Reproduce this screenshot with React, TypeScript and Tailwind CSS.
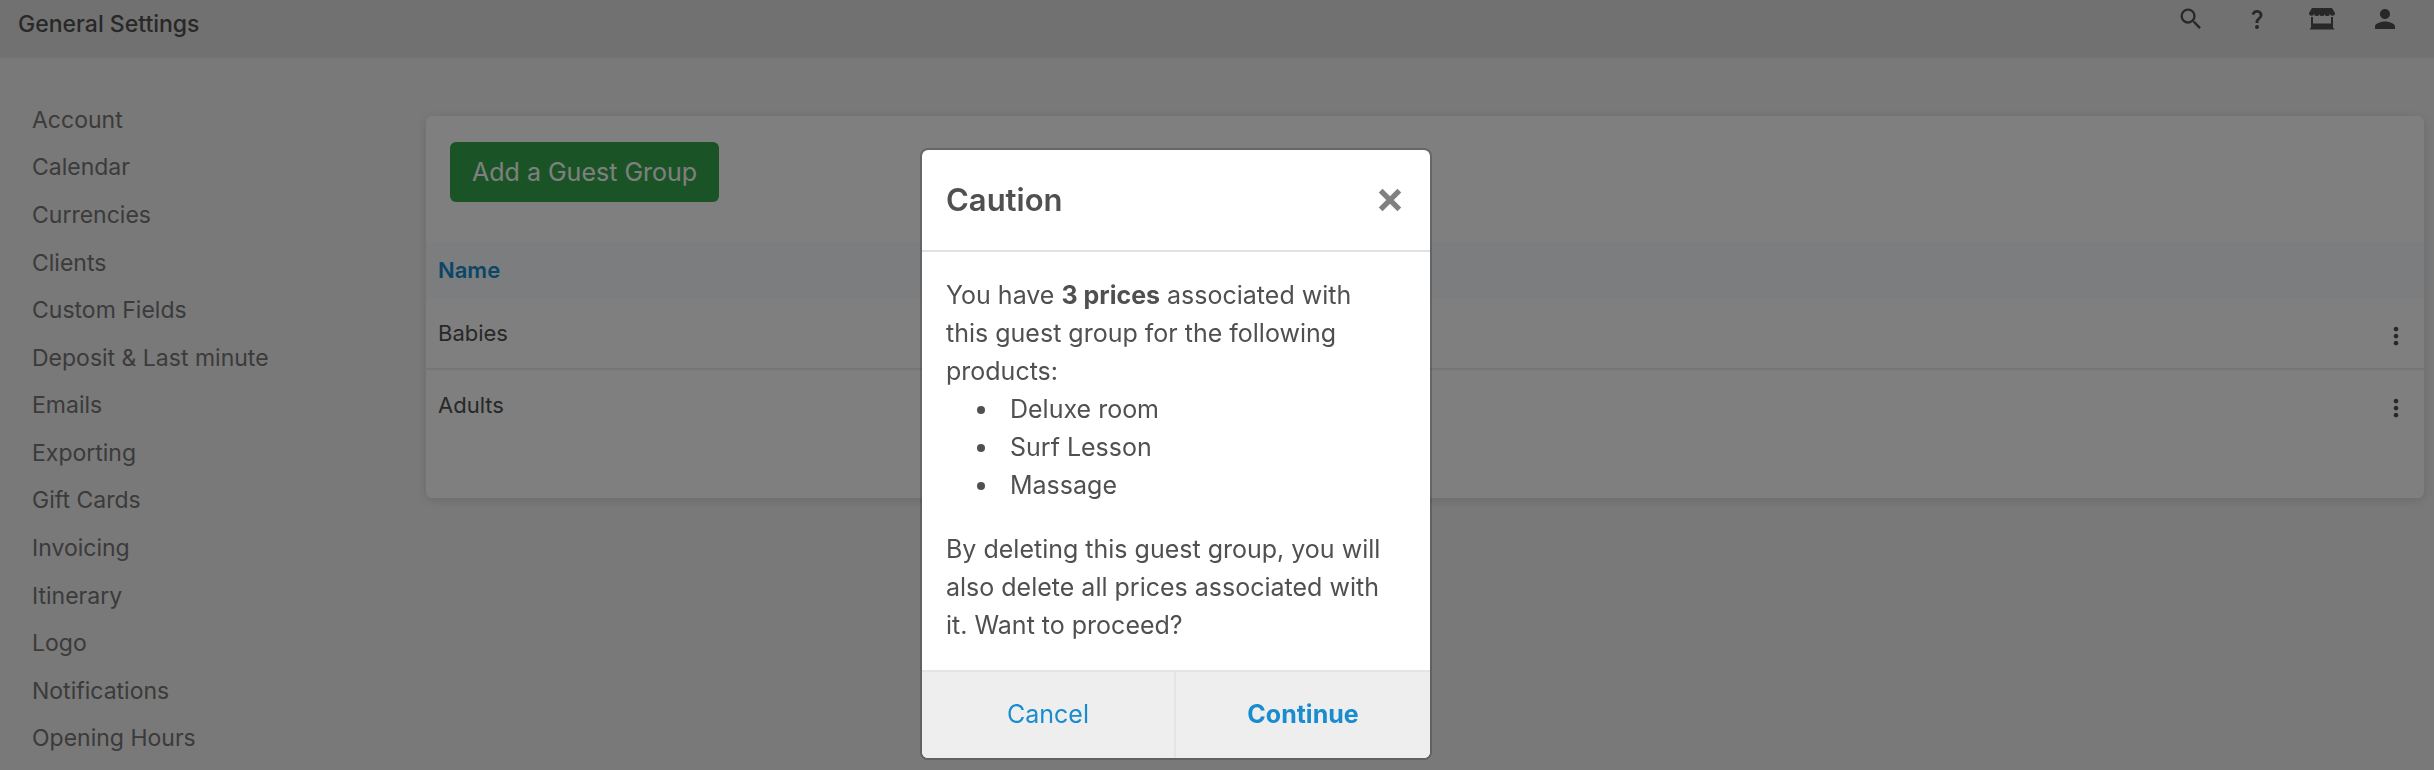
import React from "react";
import { MdSearch, MdQuestionMark, MdPerson, MdMoreVert } from "react-icons/md";

const sections = [
  "Account",
  "Calendar",
  "Currencies",
  "Clients",
  "Custom Fields",
  "Deposit & Last minute",
  "Emails",
  "Exporting",
  "Gift Cards",
  "Invoicing",
  "Itinerary",
  "Logo",
  "Notifications",
  "Opening Hours",
];

const groups = ["Babies", "Adults"];
const products = ["Deluxe room", "Surf Lesson", "Massage"];

function StoreIcon() {
  return (
    <svg viewBox="0 0 26 22" className="h-[22px] w-[26px]" fill="currentColor" aria-hidden="true">
      <path d="M3 0h20l3 5a2.600 2.600 0 0 1-5.200 0.500a2.600 2.600 0 0 1-5.200 0a2.600 2.600 0 0 1-5.200 0a2.600 2.600 0 0 1-5.200 0a2.600 2.600 0 0 1-5.200-.5z" />
      <path d="M2 9h2v6.500h18V9h2v10.500l1.500 2h-25l1.500-2z" />
    </svg>
  );
}

function Header() {
  return (
    <header className="flex h-[58px] items-start justify-between bg-[#e2e2e2] pl-[18px] pr-[34px] text-[#505050]">
      <h1 className="mt-1 text-[23px] font-medium leading-10">General Settings</h1>
      <div className="mt-1 flex items-center text-[#505050]">
        <button aria-label="Search" className="flex h-[30px] w-[66px] items-center justify-center">
          <MdSearch size={28} />
        </button>
        <button aria-label="Help" className="flex h-[30px] w-[66px] items-center justify-center">
          <MdQuestionMark size={24} />
        </button>
        <button aria-label="Store" className="flex h-[30px] w-16 items-center justify-center">
          <StoreIcon />
        </button>
        <button aria-label="Profile" className="flex h-[30px] w-[46px] items-center justify-end">
          <MdPerson size={30} />
        </button>
      </div>
    </header>
  );
}

function Sidebar() {
  return (
    <nav aria-label="Settings" className="w-[426px] shrink-0 pt-[38px]">
      <ul className="flex h-[666px] flex-col pl-8">
        {sections.map((s) => (
          <li key={s} className="flex flex-1 items-center">
            <a href="#" className="text-[23px] leading-8 text-[#767676]">
              {s}
            </a>
          </li>
        ))}
      </ul>
    </nav>
  );
}

function GuestGroups() {
  return (
    <main className="mr-[10px] mt-[58px] min-w-0 grow self-start rounded-md bg-white pb-14 shadow-[0_2px_10px_rgba(0,0,0,0.12)]">
      <div className="px-6 pb-10 pt-[26px]">
        <button className="h-[60px] rounded-md bg-[#34a84c] px-[22px] pt-[2px] text-[25px] text-white">
          Add a Guest Group
        </button>
      </div>
      <table className="w-full border-separate border-spacing-0 text-left text-[22px] text-[#505050]">
        <thead>
          <tr className="h-14 bg-[#f6fafe]">
            <th scope="col" className="px-3 font-semibold text-[#188ccf]">Name</th>
            <td />
          </tr>
        </thead>
        <tbody>
          {groups.map((g) => (
            <tr key={g} className="group h-[72px]">
              <td className="border-b-2 border-[#ececec] px-3 group-last:border-white">{g}</td>
              <td className="border-b-2 border-[#ececec] pr-[14px] text-right group-last:border-white">
                <button aria-label={`Actions for ${g}`} className="pt-1 align-middle">
                  <MdMoreVert size={28} />
                </button>
              </td>
            </tr>
          ))}
        </tbody>
      </table>
    </main>
  );
}

function CautionDialog() {
  return (
    <div className="fixed inset-0 flex items-start justify-center bg-black/50 pr-[82px] pt-[148px]">
      <div
        role="dialog"
        aria-modal="true"
        aria-labelledby="caution-title"
        className="w-[512px] rounded-lg border-2 border-black/20 bg-white bg-clip-padding text-[#505050]"
      >
        <div className="flex h-[102px] items-center justify-between border-b-2 border-[#dee2e6] px-6">
          <h2 id="caution-title" className="text-[31px] font-semibold">Caution</h2>
          <button aria-label="Close" className="text-[#808080]">
            <svg viewBox="0 0 24 24" className="size-8" stroke="currentColor" strokeWidth="4" aria-hidden="true">
              <path d="M5 5 19 19M19 5 5 19" />
            </svg>
          </button>
        </div>
        <div className="pb-[26px] pl-6 pr-10 pt-6 text-[25px] leading-[38px]">
          <p>
            You have <strong>3 prices</strong> associated with this guest group for the following products:
          </p>
          <ul className="mb-[26px] list-disc pl-[54px]">
            {products.map((p) => (
              <li key={p} className="pl-[10px]">{p}</li>
            ))}
          </ul>
          <p>By deleting this guest group, you will also delete all prices associated with it. Want to proceed?</p>
        </div>
        <div className="grid h-[88px] grid-cols-2 overflow-hidden rounded-b-md border-t-2 border-[#e4e4e4] bg-[#eeeeee] text-[25px] text-[#188ccf]">
          <button className="border-r-2 border-[#e4e4e4]">Cancel</button>
          <button className="font-bold">Continue</button>
        </div>
      </div>
    </div>
  );
}

export default function App() {
  return (
    <div className="min-h-screen bg-[#f2f2f2] font-['Inter','Liberation_Sans',sans-serif]">
      <Header />
      <div className="flex">
        <Sidebar />
        <GuestGroups />
      </div>
      <CautionDialog />
    </div>
  );
}
